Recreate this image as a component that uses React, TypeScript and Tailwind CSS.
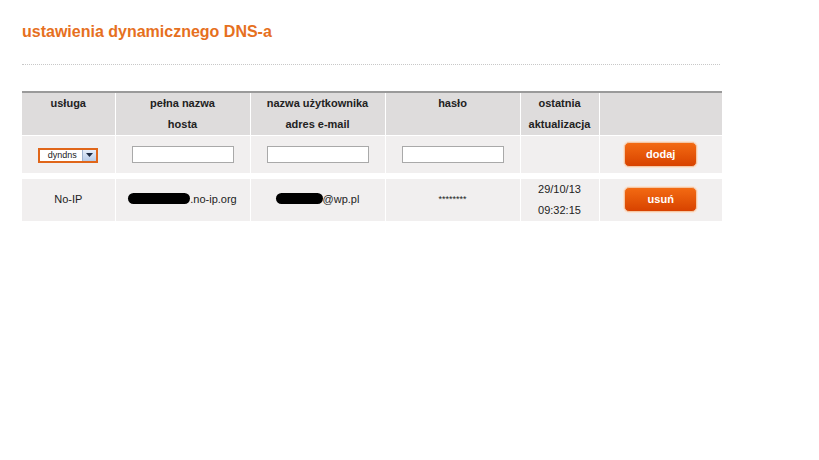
import { useState } from "react";

const cols = [
  { key: "usluga", w: "w-[93px]" },
  { key: "host", w: "w-[135px]" },
  { key: "user", w: "w-[135px]" },
  { key: "haslo", w: "w-[135px]" },
  { key: "data", w: "w-[79px]" },
  { key: "akcja", w: "w-[123px]" },
];

const OrangeButton = ({ label }: { label: string }) => (
  <button className="w-[73px] h-[25px] rounded-[5px] border border-[#f3c7a6] bg-gradient-to-b from-[#f36a12] to-[#d84200] text-white text-[11px] font-bold shadow-[0_0_0_1px_#fbe3d1]">
    {label}
  </button>
);

const Redacted = ({ w }: { w: string }) => (
  <span className={`inline-block h-[11px] ${w} bg-black rounded-full align-[-1px]`} />
);

export default function App() {
  const [service, setService] = useState("dyndns");

  return (
    <div className="w-[819px] h-[460px] bg-white font-['Liberation_Sans',Arial,sans-serif] text-[11px] text-[#222]">
      <div className="pt-[22px] pl-[22px]">
        <h1 className="text-[16px] font-bold text-[#e6701e] leading-[20px]">
          ustawienia dynamicznego DNS-a
        </h1>
        <div className="mt-[22px] w-[698px] border-t border-dotted border-[#c8c8c8]" />

        <table className="mt-[26px] w-[700px] border-collapse table-fixed border-t-2 border-[#9a9a9a]">
          <colgroup>
            {cols.map((c) => (
              <col key={c.key} className={c.w} />
            ))}
          </colgroup>
          <thead>
            <tr className="bg-[#dedcdc] h-[40px] align-top font-bold leading-[21px] text-[#222]">
              <th className="border-r border-white">usługa</th>
              <th className="border-r border-white">
                pełna nazwa
                <br />
                hosta
              </th>
              <th className="border-r border-white">
                nazwa użytkownika
                <br />
                adres e-mail
              </th>
              <th className="border-r border-white">hasło</th>
              <th className="border-r border-white">
                ostatnia
                <br />
                aktualizacja
              </th>
              <th />
            </tr>
          </thead>
          <tbody>
            <tr className="bg-[#f1efef] h-[37px] border-t border-white">
              <td className="border-r border-white text-center">
                <div className="inline-flex items-center h-[15px] w-[60px] border-2 border-[#e0661a] bg-white">
                  <select
                    value={service}
                    onChange={(e) => setService(e.target.value)}
                    className="appearance-none flex-1 min-w-0 text-[9px] leading-[11px] text-center bg-white outline-none pl-[2px]"
                  >
                    <option value="dyndns">dyndns</option>
                    <option value="noip">No-IP</option>
                  </select>
                  <span className="w-[14px] h-full flex items-center justify-center bg-gradient-to-b from-[#e6eefa] to-[#b7cbe8] border-l border-[#9fb3d0]">
                    <svg width="7" height="4" viewBox="0 0 7 4">
                      <path d="M0 0h7L3.5 4z" fill="#1c2b44" />
                    </svg>
                  </span>
                </div>
              </td>
              <td className="border-r border-white text-center">
                <input className="w-[102px] h-[17px] border border-[#a9a9a9] bg-white" />
              </td>
              <td className="border-r border-white text-center">
                <input className="w-[102px] h-[17px] border border-[#a9a9a9] bg-white" />
              </td>
              <td className="border-r border-white text-center">
                <input type="password" className="w-[102px] h-[17px] border border-[#a9a9a9] bg-white" />
              </td>
              <td className="border-r border-white" />
              <td className="text-center">
                <OrangeButton label="dodaj" />
              </td>
            </tr>
            <tr className="h-[6px] bg-white">
              <td colSpan={6} className="p-0" />
            </tr>
            <tr className="bg-[#f1efef] h-[40px] text-center leading-[21px]">
              <td className="border-r border-white">No-IP</td>
              <td className="border-r border-white">
                <Redacted w="w-[62px]" />
                .no-ip.org
              </td>
              <td className="border-r border-white">
                <Redacted w="w-[47px]" />
                @wp.pl
              </td>
              <td className="border-r border-white text-[9px]">********</td>
              <td className="border-r border-white">
                29/10/13
                <br />
                09:32:15
              </td>
              <td>
                <OrangeButton label="usuń" />
              </td>
            </tr>
          </tbody>
        </table>
      </div>
    </div>
  );
}
